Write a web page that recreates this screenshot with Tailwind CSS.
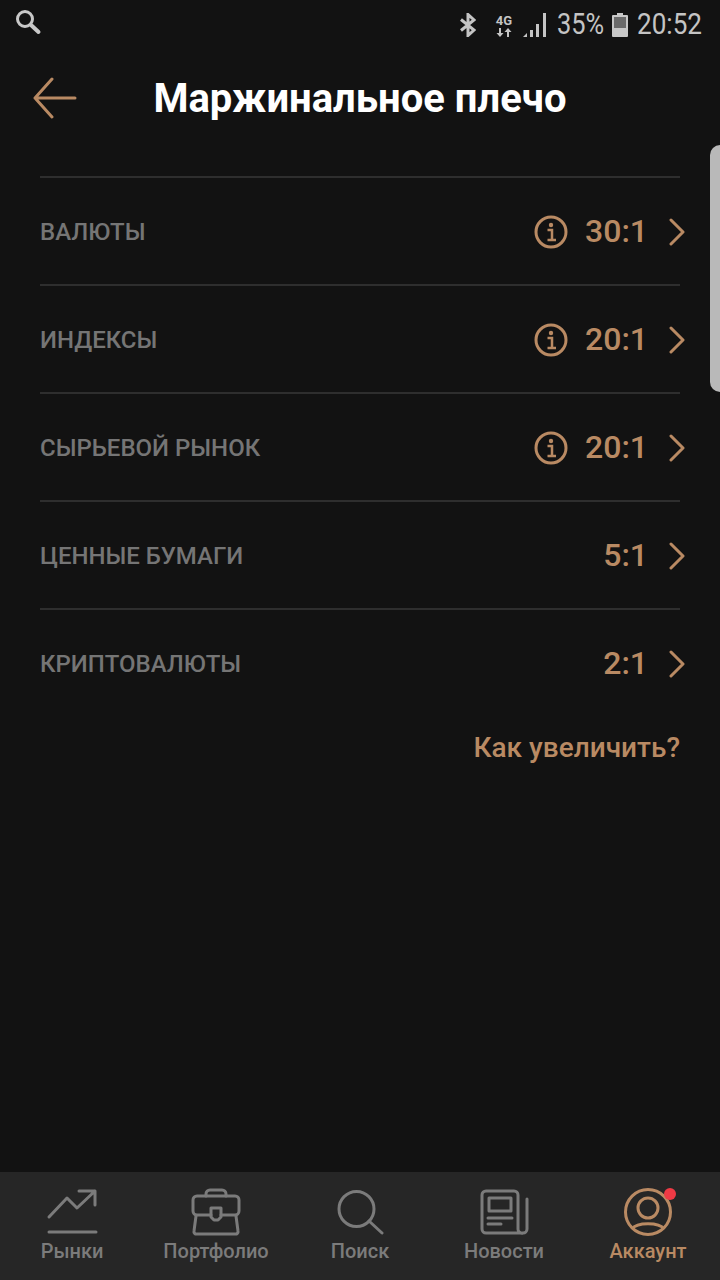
<!DOCTYPE html>
<html lang="ru">
  <head>
    <meta charset="UTF-8" />
    <title>Маржинальное плечо</title>
    <script src="https://cdn.jsdelivr.net/npm/@tailwindcss/browser@4"></script>
  </head>
  <body class="bg-[#121212] font-['Roboto',sans-serif]">
    <div class="relative w-[720px] h-[1280px] flex flex-col overflow-hidden">
      <!-- status bar -->
      <div class="h-[50px] flex items-center justify-between pl-[15px] pr-[18px] text-[#c4c4c4]">
        <svg width="28" height="28" viewBox="0 0 28 28" fill="none" stroke="#c8c8c8" class="mt-[-4px]">
          <circle cx="10" cy="10" r="7.500" stroke-width="3" />
          <path d="M16 16L23.500 23" stroke-width="4" stroke-linecap="round" />
        </svg>
        <div class="flex items-center">
          <svg width="16" height="24" viewBox="0 0 16 24" fill="none" stroke="#c4c4c4" stroke-width="3" class="mr-[19px]">
            <path d="M1 6.500L14 17L8 22.500V1.500L14 7L1 17.500" />
          </svg>
          <div class="w-[18px] flex flex-col items-center mr-[10px]">
            <span class="text-[13px] leading-[14px] font-bold">4G</span>
            <svg width="16" height="9" viewBox="0 0 16 9" fill="#c4c4c4">
              <path d="M4 9L0.500 5H3V0H5V5H7.500ZM12 0L15.500 4H13V9H11V4H8.500Z" />
            </svg>
          </div>
          <svg width="24" height="26" viewBox="0 0 24 26" fill="#c4c4c4" class="mr-[10px]">
            <path d="M0 25L4 21V25ZM7 18H10V25H7ZM13 12H16V25H13ZM20 1H23V25H20Z" />
          </svg>
          <div class="w-[47px] mr-[8px] mt-[1px] whitespace-nowrap"><span class="inline-block origin-left scale-x-[.86] text-[29.500px] leading-none">35%</span></div>
          <svg width="16" height="24" viewBox="0 0 16 24" class="mr-[9px]">
            <path d="M5 0H11V2H15A1 1 0 0 1 16 3V23A1 1 0 0 1 15 24H1A1 1 0 0 1 0 23V3A1 1 0 0 1 1 2H5Z" fill="#c8c8c8" />
            <rect x="2" y="4" width="12" height="11" fill="#6b6b6b" />
          </svg>
          <div class="w-[65px] mt-[1px] whitespace-nowrap"><span class="inline-block origin-left scale-x-[.885] text-[29.500px] leading-none">20:52</span></div>
        </div>
      </div>

      <!-- header -->
      <div class="relative h-[97px] flex items-center justify-center">
        <svg width="46" height="42" viewBox="0 0 46 42" fill="none" stroke="#b98a63" stroke-width="3" stroke-linecap="round" stroke-linejoin="round" class="absolute left-[32px] top-[27px]">
          <path d="M43 21H3M20 2L3 21L20 40" />
        </svg>
        <h1 class="text-[40px] font-bold text-white leading-none">Маржинальное плечо</h1>
      </div>

      <!-- list -->
      <div class="mx-[40px] mt-[29px] border-t-2 border-[#2e2e2e]">
        <div class="h-[108px] flex items-center justify-between border-b-2 border-[#2e2e2e]">
          <span class="mt-[2px] text-[24px] font-medium text-[#757575]">ВАЛЮТЫ</span>
          <div class="flex items-center text-[#b98a63]">
            <svg width="34" height="34" viewBox="0 0 34 34" fill="none" stroke="#b98a63" class="mr-[17px] mt-[2px]">
              <circle cx="17" cy="17" r="15" stroke-width="3" />
              <circle cx="17" cy="10" r="2.200" fill="#b98a63" stroke="none" />
              <path d="M13.500 15H18V24M13.500 25H22" stroke-width="2.500" />
            </svg>
            <span class="text-[32px] font-medium leading-none">30:1</span>
            <svg width="18" height="28" viewBox="0 0 18 28" fill="none" stroke="#b98a63" stroke-width="3" stroke-linecap="round" stroke-linejoin="round" class="ml-[20px] mr-[-6px] mt-[2px]">
              <path d="M3 2L15 14L3 26" />
            </svg>
          </div>
        </div>
        <div class="h-[108px] flex items-center justify-between border-b-2 border-[#2e2e2e]">
          <span class="mt-[2px] text-[24px] font-medium text-[#757575]">ИНДЕКСЫ</span>
          <div class="flex items-center text-[#b98a63]">
            <svg width="34" height="34" viewBox="0 0 34 34" fill="none" stroke="#b98a63" class="mr-[17px] mt-[2px]">
              <circle cx="17" cy="17" r="15" stroke-width="3" />
              <circle cx="17" cy="10" r="2.200" fill="#b98a63" stroke="none" />
              <path d="M13.500 15H18V24M13.500 25H22" stroke-width="2.500" />
            </svg>
            <span class="text-[32px] font-medium leading-none">20:1</span>
            <svg width="18" height="28" viewBox="0 0 18 28" fill="none" stroke="#b98a63" stroke-width="3" stroke-linecap="round" stroke-linejoin="round" class="ml-[20px] mr-[-6px] mt-[2px]">
              <path d="M3 2L15 14L3 26" />
            </svg>
          </div>
        </div>
        <div class="h-[108px] flex items-center justify-between border-b-2 border-[#2e2e2e]">
          <span class="mt-[2px] text-[24px] font-medium text-[#757575]">СЫРЬЕВОЙ РЫНОК</span>
          <div class="flex items-center text-[#b98a63]">
            <svg width="34" height="34" viewBox="0 0 34 34" fill="none" stroke="#b98a63" class="mr-[17px] mt-[2px]">
              <circle cx="17" cy="17" r="15" stroke-width="3" />
              <circle cx="17" cy="10" r="2.200" fill="#b98a63" stroke="none" />
              <path d="M13.500 15H18V24M13.500 25H22" stroke-width="2.500" />
            </svg>
            <span class="text-[32px] font-medium leading-none">20:1</span>
            <svg width="18" height="28" viewBox="0 0 18 28" fill="none" stroke="#b98a63" stroke-width="3" stroke-linecap="round" stroke-linejoin="round" class="ml-[20px] mr-[-6px] mt-[2px]">
              <path d="M3 2L15 14L3 26" />
            </svg>
          </div>
        </div>
        <div class="h-[108px] flex items-center justify-between border-b-2 border-[#2e2e2e]">
          <span class="mt-[2px] text-[24px] font-medium text-[#757575]">ЦЕННЫЕ БУМАГИ</span>
          <div class="flex items-center text-[#b98a63]">
            <span class="text-[32px] font-medium leading-none">5:1</span>
            <svg width="18" height="28" viewBox="0 0 18 28" fill="none" stroke="#b98a63" stroke-width="3" stroke-linecap="round" stroke-linejoin="round" class="ml-[20px] mr-[-6px] mt-[2px]">
              <path d="M3 2L15 14L3 26" />
            </svg>
          </div>
        </div>
        <div class="h-[106px] flex items-center justify-between">
          <span class="mt-[2px] text-[24px] font-medium text-[#757575]">КРИПТОВАЛЮТЫ</span>
          <div class="flex items-center text-[#b98a63]">
            <span class="text-[32px] font-medium leading-none">2:1</span>
            <svg width="18" height="28" viewBox="0 0 18 28" fill="none" stroke="#b98a63" stroke-width="3" stroke-linecap="round" stroke-linejoin="round" class="ml-[20px] mr-[-6px] mt-[2px]">
              <path d="M3 2L15 14L3 26" />
            </svg>
          </div>
        </div>
      </div>
      <div class="mx-[40px] mt-[18px] text-right text-[28px] font-medium text-[#b98a63] leading-none">Как увеличить?</div>

      <!-- bottom nav -->
      <div class="mt-auto h-[108px] bg-[#262626] grid grid-cols-5 text-[#7b7b7b]">
        <div class="flex flex-col items-center pt-[16px]">
          <svg width="52" height="46" viewBox="0 0 52 46" fill="none" stroke="#7b7b7b" stroke-width="3" stroke-linecap="round" stroke-linejoin="round">
            <path d="M3 29L21 10L31 20L49 3M33 3H49V17M3 44H50" />
          </svg>
          <span class="text-[20px] font-medium leading-none mt-[7px]">Рынки</span>
        </div>
        <div class="flex flex-col items-center pt-[16px]">
          <svg width="50" height="48" viewBox="0 0 50 48" fill="none" stroke="#7b7b7b" stroke-width="3" stroke-linecap="round" stroke-linejoin="round">
            <path d="M15 8V6A4 4 0 0 1 19 2H31A4 4 0 0 1 35 6V8" />
            <path d="M20 27H6A4 4 0 0 1 2 23V12A4 4 0 0 1 6 8H44A4 4 0 0 1 48 12V23A4 4 0 0 1 44 27H30" />
            <path d="M5 28L3 43A2.500 2.500 0 0 0 6 46H44A2.500 2.500 0 0 0 47 43L45 28" />
            <path d="M20 20H30V29L27 32H23L20 29Z" />
          </svg>
          <span class="text-[20px] font-medium leading-none mt-[5px]">Портфолио</span>
        </div>
        <div class="flex flex-col items-center pt-[16px]">
          <svg width="48" height="48" viewBox="0 0 48 48" fill="none" stroke="#7b7b7b" stroke-width="3" stroke-linecap="round">
            <circle cx="20.500" cy="21" r="17.500" />
            <path d="M33 33L46 45" />
          </svg>
          <span class="text-[20px] font-medium leading-none mt-[5px]">Поиск</span>
        </div>
        <div class="flex flex-col items-center pt-[16px]">
          <svg width="50" height="48" viewBox="0 0 50 48" fill="none" stroke="#7b7b7b" stroke-width="3" stroke-linecap="round" stroke-linejoin="round">
            <path d="M44 45H7A4 4 0 0 1 3 41V7A4 4 0 0 1 7 3H35A4 4 0 0 1 39 7V41A4 4 0 0 0 44 45A4 4 0 0 0 48 41V11" />
            <rect x="10" y="10" width="22" height="13" />
            <path d="M9 30H33M9 36H22" />
          </svg>
          <span class="text-[20px] font-medium leading-none mt-[5px]">Новости</span>
        </div>
        <div class="flex flex-col items-center pt-[16px] text-[#b98a63]">
          <div class="relative">
            <svg width="48" height="48" viewBox="0 0 48 48" fill="none" stroke="#b98a63" stroke-width="3">
              <circle cx="24" cy="24" r="22.500" />
              <circle cx="24" cy="20" r="10" />
              <path d="M8 41C13 34 35 34 40 41" />
            </svg>
            <div class="absolute top-0 right-[-4px] w-[12px] h-[12px] rounded-full bg-[#ef3a45]"></div>
          </div>
          <span class="text-[20px] font-medium leading-none mt-[5px]">Аккаунт</span>
        </div>
      </div>

      <!-- edge panel handle -->
      <div class="absolute right-0 top-[145px] w-[10px] h-[247px] bg-[#b9b9b9] rounded-l-[10px]"></div>
    </div>
  </body>
</html>
